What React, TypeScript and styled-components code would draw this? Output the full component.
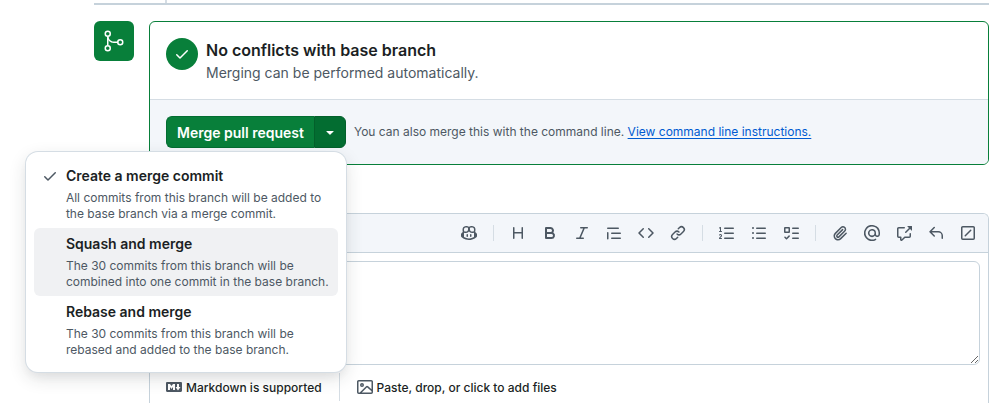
import React from "react";
import styled, { createGlobalStyle } from "styled-components";
import { GoGitMerge } from "react-icons/go";

const color = {
  text: "#1b1f24",
  muted: "#4d5863",
  green: "#087f3a",
  greenDark: "#036d31",
  border: "#c6d2db",
  borderMuted: "#d5dde4",
  surface: "#f3f6fa",
  link: "#005bd1",
};

const GlobalStyle = createGlobalStyle`
  *, *::before, *::after { box-sizing: border-box; }
  body {
    margin: 0;
    background: #fff;
    color: ${color.text};
    font-family: Inter, "Liberation Sans", sans-serif;
    font-size: 14px;
    line-height: 21px;
  }
  button, textarea { font: inherit; color: inherit; }
  h3, p, ul { margin: 0; padding: 0; }
`;

const paths = {
  check:
    "M13.78 4.22a.75.75 0 0 1 0 1.06l-7.25 7.25a.75.75 0 0 1-1.06 0L2.22 9.28a.751.751 0 0 1 .018-1.042.751.751 0 0 1 1.042-.018L6 10.94l6.72-6.72a.75.75 0 0 1 1.06 0Z",
  triangle:
    "m4.427 7.427 3.396 3.396a.25.25 0 0 0 .354 0l3.396-3.396A.25.25 0 0 0 11.396 7H4.604a.25.25 0 0 0-.177.427Z",
  copilot:
    "M7.998 15.035c-4.562 0-7.873-2.914-7.998-3.749V9.338c.085-.628.677-1.686 1.588-2.065.013-.07.024-.143.036-.218.029-.183.06-.384.126-.612-.201-.508-.254-1.084-.254-1.656 0-.87.128-1.769.693-2.484.579-.733 1.494-1.124 2.724-1.261 1.206-.134 2.262.034 2.944.765.05.053.096.108.139.165.044-.057.094-.112.143-.165.682-.731 1.738-.899 2.944-.765 1.23.137 2.145.528 2.724 1.261.566.715.693 1.614.693 2.484 0 .572-.053 1.148-.254 1.656.066.228.098.429.126.612.012.076.024.148.037.218.924.385 1.522 1.471 1.591 2.095v1.872c0 .766-3.351 3.795-8.002 3.795Zm0-1.485c2.28 0 4.584-1.11 5.002-1.433V7.862l-.023-.116c-.49.21-1.075.291-1.727.291-1.146 0-2.059-.327-2.71-.991A3.222 3.222 0 0 1 8 6.303a3.24 3.24 0 0 1-.544.743c-.65.664-1.563.991-2.71.991-.652 0-1.236-.081-1.727-.291l-.023.116v4.255c.419.323 2.722 1.433 5.002 1.433ZM6.762 2.83c-.193-.206-.637-.413-1.682-.297-1.019.113-1.479.404-1.713.7-.247.312-.369.789-.369 1.554 0 .793.129 1.171.308 1.371.162.181.519.379 1.442.379.853 0 1.339-.235 1.638-.54.315-.322.527-.827.617-1.553.117-.935-.037-1.395-.241-1.614Zm4.155-.297c-1.044-.116-1.488.091-1.681.297-.204.219-.359.679-.242 1.614.091.726.303 1.231.618 1.553.299.305.784.54 1.638.54.922 0 1.28-.198 1.442-.379.179-.2.308-.578.308-1.371 0-.765-.123-1.242-.37-1.554-.233-.296-.693-.587-1.713-.7ZM6.25 9.037a.75.75 0 0 1 .75.75v1.501a.75.75 0 0 1-1.5 0V9.787a.75.75 0 0 1 .75-.75Zm4.25.75v1.501a.75.75 0 0 1-1.5 0V9.787a.75.75 0 0 1 1.5 0Z",
  heading:
    "M3.75 2a.75.75 0 0 1 .75.75V7h7V2.75a.75.75 0 0 1 1.5 0v10.5a.75.75 0 0 1-1.5 0V8.5h-7v4.75a.75.75 0 0 1-1.5 0V2.75A.75.75 0 0 1 3.75 2Z",
  bold: "M4 2h4.5a3.501 3.501 0 0 1 2.852 5.53A3.499 3.499 0 0 1 9.5 14H4a1 1 0 0 1-1-1V3a1 1 0 0 1 1-1Zm1 7v3h4.5a1.5 1.5 0 0 0 0-3Zm3.5-2a1.5 1.5 0 0 0 0-3H5v3Z",
  italic:
    "M6 2.75A.75.75 0 0 1 6.75 2h6.5a.75.75 0 0 1 0 1.5h-2.505l-3.858 9H9.25a.75.75 0 0 1 0 1.5h-6.5a.75.75 0 0 1 0-1.5h2.505l3.858-9H6.75A.75.75 0 0 1 6 2.75Z",
  quote:
    "M1.75 2.5h10.5a.75.75 0 0 1 0 1.5H1.75a.75.75 0 0 1 0-1.5Zm4 5h8.5a.75.75 0 0 1 0 1.5h-8.5a.75.75 0 0 1 0-1.5Zm0 5h8.5a.75.75 0 0 1 0 1.5h-8.5a.75.75 0 0 1 0-1.5ZM2.5 7.75v6a.75.75 0 0 1-1.5 0v-6a.75.75 0 0 1 1.5 0Z",
  code: "m11.28 3.22 4.25 4.25a.75.75 0 0 1 0 1.06l-4.25 4.25a.749.749 0 0 1-1.275-.326.749.749 0 0 1 .215-.734L13.94 8l-3.72-3.72a.749.749 0 0 1 .326-1.275.749.749 0 0 1 .734.215Zm-6.56 0a.751.751 0 0 1 1.042.018.751.751 0 0 1 .018 1.042L2.06 8l3.72 3.72a.749.749 0 0 1-.326 1.275.749.749 0 0 1-.734-.215L.47 8.53a.75.75 0 0 1 0-1.06Z",
  link: "m7.775 3.275 1.25-1.25a3.5 3.5 0 1 1 4.95 4.95l-2.5 2.5a3.5 3.5 0 0 1-4.95 0 .751.751 0 0 1 .018-1.042.751.751 0 0 1 1.042-.018 1.998 1.998 0 0 0 2.83 0l2.5-2.5a2.002 2.002 0 0 0-2.83-2.83l-1.25 1.25a.751.751 0 0 1-1.042-.018.751.751 0 0 1-.018-1.042Zm-4.69 9.64a1.998 1.998 0 0 0 2.83 0l1.25-1.25a.751.751 0 0 1 1.042.018.751.751 0 0 1 .018 1.042l-1.25 1.25a3.5 3.5 0 1 1-4.95-4.95l2.5-2.5a3.5 3.5 0 0 1 4.95 0 .751.751 0 0 1-.018 1.042.751.751 0 0 1-1.042.018 1.998 1.998 0 0 0-2.83 0l-2.5 2.5a1.998 1.998 0 0 0 0 2.83Z",
  listOrdered:
    "M5 3.25a.75.75 0 0 1 .75-.75h8.5a.75.75 0 0 1 0 1.5h-8.5A.75.75 0 0 1 5 3.25Zm0 5a.75.75 0 0 1 .75-.75h8.5a.75.75 0 0 1 0 1.5h-8.5A.75.75 0 0 1 5 8.25Zm0 5a.75.75 0 0 1 .75-.75h8.5a.75.75 0 0 1 0 1.5h-8.5a.75.75 0 0 1-.75-.75ZM.924 10.32a.5.5 0 0 1-.851-.525l.001-.001.001-.002.002-.004.007-.011c.097-.144.215-.273.348-.384.228-.19.588-.392 1.068-.392.468 0 .858.181 1.126.484.259.294.377.673.377 1.038 0 .987-.686 1.495-1.156 1.845l-.047.035c-.303.225-.522.4-.654.597h1.357a.5.5 0 0 1 0 1H.5a.5.5 0 0 1-.5-.5c0-1.005.692-1.52 1.167-1.875l.035-.025c.531-.396.8-.625.8-1.078a.57.57 0 0 0-.128-.376C1.806 10.068 1.695 10 1.5 10a.658.658 0 0 0-.429.163.835.835 0 0 0-.144.153ZM2.003 2.5V6h.503a.5.5 0 0 1 0 1H.5a.5.5 0 0 1 0-1h.503V3.308l-.28.14a.5.5 0 0 1-.446-.895l1.003-.5a.5.5 0 0 1 .723.447Z",
  listUnordered:
    "M5.75 2.5h8.5a.75.75 0 0 1 0 1.5h-8.5a.75.75 0 0 1 0-1.5Zm0 5h8.5a.75.75 0 0 1 0 1.5h-8.5a.75.75 0 0 1 0-1.5Zm0 5h8.5a.75.75 0 0 1 0 1.5h-8.5a.75.75 0 0 1 0-1.5ZM2 14a1 1 0 1 1 0-2 1 1 0 0 1 0 2Zm1-6a1 1 0 1 1-2 0 1 1 0 0 1 2 0ZM2 4a1 1 0 1 1 0-2 1 1 0 0 1 0 2Z",
  tasklist:
    "M2 2h4a1 1 0 0 1 1 1v4a1 1 0 0 1-1 1H2a1 1 0 0 1-1-1V3a1 1 0 0 1 1-1Zm4.655 8.595a.75.75 0 0 1 0 1.06L4.03 14.28a.75.75 0 0 1-1.06 0l-1.5-1.5a.749.749 0 0 1 .326-1.275.749.749 0 0 1 .734.215l.97.97 2.095-2.095a.75.75 0 0 1 1.06 0ZM9.75 2.5h5.5a.75.75 0 0 1 0 1.5h-5.5a.75.75 0 0 1 0-1.5Zm0 5h5.5a.75.75 0 0 1 0 1.5h-5.5a.75.75 0 0 1 0-1.5Zm0 5h5.5a.75.75 0 0 1 0 1.5h-5.5a.75.75 0 0 1 0-1.5Zm-7.25-9v3h3v-3Z",
  paperclip:
    "M12.212 3.02a1.753 1.753 0 0 0-2.478.03l-5.83 5.83a3.007 3.007 0 0 0-.88 2.127c0 .795.315 1.551.88 2.116.567.567 1.333.89 2.126.89.79 0 1.548-.321 2.116-.89l5.48-5.48a.75.75 0 0 1 1.061 1.06l-5.48 5.48a4.492 4.492 0 0 1-3.177 1.33c-1.2 0-2.345-.487-3.187-1.33a4.483 4.483 0 0 1-1.32-3.177c0-1.195.475-2.341 1.32-3.186l5.83-5.83a3.25 3.25 0 0 1 5.553 2.297c0 .863-.343 1.691-.953 2.301L7.439 12.39c-.375.377-.884.59-1.416.593a1.998 1.998 0 0 1-1.412-.593 1.992 1.992 0 0 1 0-2.828l5.48-5.48a.751.751 0 0 1 1.042.018.751.751 0 0 1 .018 1.042l-5.48 5.48a.492.492 0 0 0 0 .707.499.499 0 0 0 .352.154.51.51 0 0 0 .356-.154l5.833-5.827a1.755 1.755 0 0 0 0-2.481Z",
  mention:
    "M4.75 2.37a6.501 6.501 0 0 0 6.5 11.26.75.75 0 0 1 .75 1.298A7.999 7.999 0 0 1 .989 4.148 8 8 0 0 1 16 7.75v1.5a2.75 2.75 0 0 1-5.072 1.475 3.999 3.999 0 0 1-6.65-4.19A4 4 0 0 1 12 8v1.25a1.25 1.25 0 0 0 2.5 0V7.867a6.5 6.5 0 0 0-9.75-5.496ZM10.5 8a2.5 2.5 0 1 0-5 0 2.5 2.5 0 0 0 5 0Z",
  crossReference:
    "M2.75 3.5a.25.25 0 0 0-.25.25v7.5c0 .138.112.25.25.25h2a.75.75 0 0 1 .75.75v2.19l2.72-2.72a.749.749 0 0 1 .53-.22h4.5a.25.25 0 0 0 .25-.25v-2.5a.75.75 0 0 1 1.5 0v2.5A1.75 1.75 0 0 1 13.25 13H9.06l-2.573 2.573A1.458 1.458 0 0 1 4 14.543V13H2.75A1.75 1.75 0 0 1 1 11.25v-7.5C1 2.784 1.784 2 2.75 2h5.5a.75.75 0 0 1 0 1.5ZM16 1.25v4.146a.25.25 0 0 1-.427.177L14.03 4.03l-3.75 3.75a.749.749 0 0 1-1.275-.326.749.749 0 0 1 .215-.734l3.75-3.75-1.543-1.543A.25.25 0 0 1 11.604 1h4.146a.25.25 0 0 1 .25.25Z",
  reply:
    "M6.78 1.97a.75.75 0 0 1 0 1.06L3.81 6h6.44A4.75 4.75 0 0 1 15 10.75v2.5a.75.75 0 0 1-1.5 0v-2.5a3.25 3.25 0 0 0-3.25-3.25H3.81l2.97 2.97a.749.749 0 0 1-.326 1.275.749.749 0 0 1-.734-.215L1.47 7.28a.75.75 0 0 1 0-1.06l4.25-4.25a.75.75 0 0 1 1.06 0Z",
  slash:
    "M13.25 1c.966 0 1.75.784 1.75 1.75v10.5A1.75 1.75 0 0 1 13.25 15H2.75A1.75 1.75 0 0 1 1 13.25V2.75C1 1.784 1.784 1 2.75 1ZM2.75 2.5a.25.25 0 0 0-.25.25v10.5c0 .138.112.25.25.25h10.5a.25.25 0 0 0 .25-.25V2.75a.25.25 0 0 0-.25-.25Zm8.53 3.28-5.5 5.5a.75.75 0 0 1-1.06-1.06l5.5-5.5a.75.75 0 0 1 1.06 1.06Z",
  markdown:
    "M14.85 3c.63 0 1.15.52 1.14 1.15v7.7c0 .63-.51 1.15-1.15 1.15H1.15C.52 13 0 12.48 0 11.84V4.15C0 3.52.52 3 1.15 3ZM9 11V5H7L5.5 7 4 5H2v6h2V8l1.5 1.92L7 8v3Zm2.99.5L14.5 8H13V5h-2v3H9.5Z",
  image:
    "M16 13.25A1.75 1.75 0 0 1 14.25 15H1.75A1.75 1.75 0 0 1 0 13.25V2.75C0 1.784.784 1 1.75 1h12.5c.966 0 1.75.784 1.75 1.75ZM1.75 2.5a.25.25 0 0 0-.25.25v10.5c0 .138.112.25.25.25h.94l.03-.03 6.077-6.078a1.75 1.75 0 0 1 2.412-.06L14.5 10.31V2.75a.25.25 0 0 0-.25-.25Zm12.5 11a.25.25 0 0 0 .25-.25v-.917l-4.298-3.889a.25.25 0 0 0-.344.009L4.81 13.5ZM7 6a2 2 0 1 1-3.999.001A2 2 0 0 1 7 6ZM5.5 6a.5.5 0 1 0-1 0 .5.5 0 0 0 1 0Z",
};

type IconName = keyof typeof paths;

const Svg = styled.svg`
  display: block;
  flex: none;
  fill: currentColor;
`;

const Icon = ({ name }: { name: IconName }) => (
  <Svg width="16" height="16" viewBox="0 0 16 16" aria-hidden="true">
    <path d={paths[name]} />
  </Svg>
);

const Page = styled.main`
  display: flex;
  flex-direction: column;
  min-height: 100vh;
  padding: 0 9px 0 94px;
`;

const TimelineEnd = styled.div`
  height: 5px;
  padding-left: 71px;
  border-bottom: 2px solid ${color.border};
`;

const TimelineLine = styled.div`
  width: 2px;
  height: 100%;
  background: ${color.borderMuted};
`;

const MergeArea = styled.section`
  display: flex;
  align-items: flex-start;
  gap: 15px;
  margin-top: 16px;
`;

const MergeBadge = styled.div`
  display: grid;
  place-items: center;
  flex: none;
  width: 40px;
  height: 40px;
  border-radius: 6px;
  background: ${color.green};
  color: #fff;
`;

const MergeCard = styled.div`
  flex: 1;
  min-width: 0;
  border: 1px solid ${color.green};
  border-radius: 6px;
`;

const Status = styled.div`
  display: flex;
  gap: 8px;
  padding: 16px;
  border-bottom: 1px solid ${color.borderMuted};
`;

const StatusIcon = styled.div`
  display: grid;
  place-items: center;
  flex: none;
  width: 32px;
  height: 32px;
  border-radius: 50%;
  background: ${color.green};
  color: #fff;
`;

const StatusTitle = styled.h3`
  font-size: 16px;
  font-weight: 600;
  line-height: 24px;
`;

const StatusText = styled.p`
  color: ${color.muted};
`;

const MergeActions = styled.div`
  display: flex;
  align-items: center;
  gap: 8px;
  padding: 16px;
  border-radius: 0 0 5px 5px;
  background: ${color.surface};
`;

const SplitButton = styled.div`
  position: relative;
  display: flex;
  flex: none;
`;

const MergeButton = styled.button`
  height: 32px;
  padding: 0 10px;
  border: 1px solid ${color.greenDark};
  border-right: 0;
  border-radius: 6px 0 0 6px;
  background: ${color.green};
  color: #fff;
  font-weight: 600;
  white-space: nowrap;
`;

const MenuToggle = styled.button`
  display: grid;
  place-items: center;
  width: 32px;
  height: 32px;
  padding: 0;
  border: 1px solid #03602b;
  border-radius: 0 6px 6px 0;
  background: ${color.greenDark};
  color: #fff;
`;

const Hint = styled.p`
  color: ${color.muted};
  font-size: 12px;
  line-height: 18px;
`;

const HintLink = styled.a`
  color: ${color.link};
  text-decoration: underline;
  text-underline-offset: 2px;
`;

const Menu = styled.ul`
  position: absolute;
  z-index: 1;
  top: calc(100% + 4px);
  right: 0;
  width: 320px;
  padding: 8px;
  border-radius: 12px;
  background: #fff;
  box-shadow: 0 0 0 1px ${color.borderMuted}, 0 6px 12px -3px rgba(37, 41, 46, 0.06),
    0 6px 18px 0 rgba(37, 41, 46, 0.14);
  list-style: none;
`;

const MenuItem = styled.button<{ $active?: boolean }>`
  display: grid;
  grid-template-columns: 16px 1fr;
  gap: 4px 8px;
  width: 100%;
  padding: 6px 8px;
  border: 0;
  border-radius: 6px;
  background: ${(p) => (p.$active ? "#f0f1f3" : "transparent")};
  text-align: left;
`;

const CheckSlot = styled.span`
  display: flex;
  align-items: center;
  height: 20px;
  color: ${color.muted};
`;

const ItemTitle = styled.span`
  font-weight: 600;
  line-height: 20px;
`;

const ItemText = styled.span`
  grid-column: 2;
  color: ${color.muted};
  font-size: 12px;
  line-height: 16px;
  white-space: pre-line;
`;

const CommentBox = styled.section`
  flex: 1;
  margin: 48px 0 0 55px;
  border: 1px solid ${color.border};
  border-bottom: 0;
  border-radius: 6px 6px 0 0;
`;

const Toolbar = styled.div`
  display: flex;
  align-items: center;
  justify-content: flex-end;
  height: 39px;
  padding: 0 4px;
  border-bottom: 1px solid ${color.border};
  border-radius: 5px 5px 0 0;
  background: ${color.surface};
`;

const ToolButton = styled.button`
  display: grid;
  place-items: center;
  width: 32px;
  height: 32px;
  padding: 0;
  border: 0;
  background: none;
  color: ${color.muted};
`;

const Divider = styled.span`
  width: 1px;
  height: 16px;
  margin: 0 8px;
  background: ${color.borderMuted};
`;

const FooterDivider = styled(Divider)`
  height: 28px;
  margin: 0 9px;
`;

const Field = styled.div`
  display: flex;
  padding: 8px;
`;

const Editor = styled.textarea`
  flex: 1;
  height: 104px;
  padding: 8px;
  border: 1px solid ${color.border};
  border-radius: 6px;
  background: #fff;
  resize: vertical;
  outline: 0;
`;

const BoxFooter = styled.div`
  display: flex;
  align-items: center;
  padding: 0 8px 2px;
`;

const FooterLink = styled.a`
  display: flex;
  align-items: center;
  gap: 4px;
  height: 28px;
  padding: 0 8px;
  color: ${color.text};
  font-size: 12px;
  font-weight: 500;
  text-decoration: none;
`;

const FooterButton = styled(FooterLink).attrs({ as: "button", type: "button" })`
  border: 0;
  background: none;
`;

const MutedIcon = styled.span`
  color: ${color.muted};
`;

const mergeOptions = [
  {
    title: "Create a merge commit",
    text: "All commits from this branch will be added to\nthe base branch via a merge commit.",
    selected: true,
  },
  {
    title: "Squash and merge",
    text: "The 30 commits from this branch will be\ncombined into one commit in the base branch.",
    active: true,
  },
  {
    title: "Rebase and merge",
    text: "The 30 commits from this branch will be\nrebased and added to the base branch.",
  },
];

const tools: { name: IconName; label: string }[][] = [
  [{ name: "copilot", label: "Copilot" }],
  [
    { name: "heading", label: "Heading" },
    { name: "bold", label: "Bold" },
    { name: "italic", label: "Italic" },
    { name: "quote", label: "Quote" },
    { name: "code", label: "Code" },
    { name: "link", label: "Link" },
  ],
  [
    { name: "listOrdered", label: "Numbered list" },
    { name: "listUnordered", label: "Unordered list" },
    { name: "tasklist", label: "Task list" },
  ],
  [
    { name: "paperclip", label: "Attach files" },
    { name: "mention", label: "Mention" },
    { name: "crossReference", label: "Reference" },
    { name: "reply", label: "Saved replies" },
    { name: "slash", label: "Slash commands" },
  ],
];

export default function App() {
  return (
    <>
      <GlobalStyle />
      <Page>
        <TimelineEnd>
          <TimelineLine />
        </TimelineEnd>
        <MergeArea>
          <MergeBadge>
            <GoGitMerge size={24} aria-hidden="true" />
          </MergeBadge>
          <MergeCard>
            <Status>
              <StatusIcon>
                <Icon name="check" />
              </StatusIcon>
              <div>
                <StatusTitle>No conflicts with base branch</StatusTitle>
                <StatusText>Merging can be performed automatically.</StatusText>
              </div>
            </Status>
            <MergeActions>
              <SplitButton>
                <MergeButton type="button">Merge pull request</MergeButton>
                <MenuToggle
                  type="button"
                  aria-label="Select merge method"
                  aria-haspopup="menu"
                  aria-expanded="true"
                >
                  <Icon name="triangle" />
                </MenuToggle>
                <Menu role="menu">
                  {mergeOptions.map((option) => (
                    <li key={option.title} role="none">
                      <MenuItem
                        type="button"
                        role="menuitemradio"
                        aria-checked={!!option.selected}
                        $active={option.active}
                      >
                        <CheckSlot>{option.selected && <Icon name="check" />}</CheckSlot>
                        <ItemTitle>{option.title}</ItemTitle>
                        <ItemText>{option.text}</ItemText>
                      </MenuItem>
                    </li>
                  ))}
                </Menu>
              </SplitButton>
              <Hint>
                You can also merge this with the command line.{" "}
                <HintLink href="#instructions">View command line instructions.</HintLink>
              </Hint>
            </MergeActions>
          </MergeCard>
        </MergeArea>
        <CommentBox>
          <Toolbar role="toolbar" aria-label="Formatting tools">
            {tools.map((group, index) => (
              <React.Fragment key={group[0].name}>
                {index > 0 && <Divider />}
                {group.map((tool) => (
                  <ToolButton key={tool.name} type="button" aria-label={tool.label}>
                    <Icon name={tool.name} />
                  </ToolButton>
                ))}
              </React.Fragment>
            ))}
          </Toolbar>
          <Field>
            <Editor aria-label="Comment" />
          </Field>
          <BoxFooter>
            <FooterLink href="#markdown">
              <MutedIcon>
                <Icon name="markdown" />
              </MutedIcon>
              Markdown is supported
            </FooterLink>
            <FooterDivider />
            <FooterButton>
              <MutedIcon>
                <Icon name="image" />
              </MutedIcon>
              Paste, drop, or click to add files
            </FooterButton>
          </BoxFooter>
        </CommentBox>
      </Page>
    </>
  );
}
